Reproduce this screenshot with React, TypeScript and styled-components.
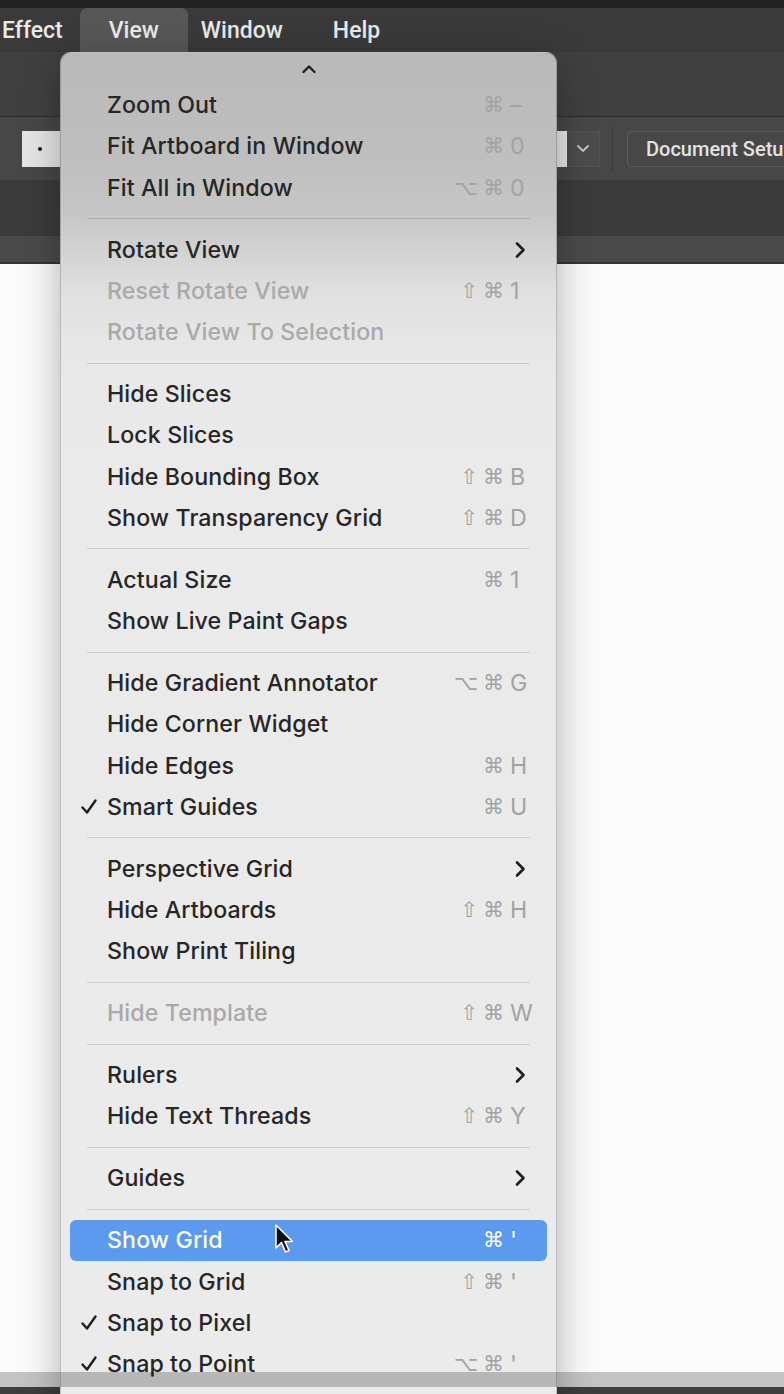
import React from 'react';
import styled, { createGlobalStyle } from 'styled-components';

// ========== Style start ==========================

const GlobalStyle = createGlobalStyle`
  html, body {
    margin: 0;
    padding: 0;
    height: 100%;
    overflow: hidden;
    background: #fbfbfb;
  }
  #root {
    height: 100%;
  }
`;

const Screen = styled.div`
  position: relative;
  height: 1394px;
  display: flex;
  flex-direction: column;
  overflow: hidden;
  font-family: Inter, "Noto Sans", sans-serif;
`;

const TopEdge = styled.div`
  height: 8px;
  background: #222222;
`;

const MenuBar = styled.div`
  height: 44px;
  display: flex;
  align-items: stretch;
  padding-left: 2px;
  background: #3a3a3a;
`;

const MenuTitle = styled.div<{ $active?: boolean; $ml?: number }>`
  display: flex;
  align-items: center;
  flex-shrink: 0;
  margin-left: ${p => p.$ml ?? 0}px;
  padding: 0 ${p => (p.$active ? 29 : 0)}px;
  font-family: Roboto, "Noto Sans", sans-serif;
  font-size: 23px;
  font-weight: 500;
  color: #e9e9e9;
  background: ${p => (p.$active ? '#575757' : 'transparent')};
  border-radius: 7px 7px 0 0;
`;

const ToolStrip = styled.div`
  height: 64px;
  background: #404040;
  border-bottom: 1px solid #2c2c2c;
`;

const ControlBar = styled.div`
  height: 63px;
  display: flex;
  align-items: center;
  padding-left: 22px;
  background: #474747;

  & > * {
    flex-shrink: 0;
  }
`;

const ValueField = styled.div`
  width: 545px;
  height: 36px;
  display: flex;
  align-items: center;
  padding-left: 16px;
  box-sizing: border-box;
  background: #e6e6e6;

  &::before {
    content: "";
    width: 4px;
    height: 4px;
    border-radius: 50%;
    background: #111;
  }
`;

const DropButton = styled.div`
  width: 33px;
  height: 36px;
  display: flex;
  align-items: center;
  justify-content: center;
  box-sizing: border-box;
  background: #4c4c4c;
  border: 1px solid #545454;
  border-left: none;
`;

const BarDivider = styled.div`
  width: 1px;
  height: 44px;
  margin: 0 14px 0 12px;
  background: #3a3a3a;
`;

const SetupButton = styled.div`
  height: 36px;
  display: flex;
  align-items: center;
  padding: 0 18px;
  border: 1px solid #5e5e5e;
  border-radius: 4px;
  box-sizing: border-box;
  font-family: Roboto, Inter, sans-serif;
  font-size: 20px;
  font-weight: 500;
  color: #e2e2e2;
  white-space: nowrap;
`;

const PanelBar = styled.div`
  height: 56px;
  background: #3b3b3b;
`;

const TabStrip = styled.div`
  height: 26px;
  background: #4a4a4a;
  border-bottom: 2px solid #333333;
`;

const Canvas = styled.div`
  flex: 1;
  background: #fbfbfb;
`;

const StatusBar = styled.div`
  height: 7px;
  background: #3e3e3e;
`;

const VideoBand = styled.div`
  position: absolute;
  left: 0;
  right: 0;
  bottom: 7px;
  height: 15px;
  background: rgba(0, 0, 0, 0.22);
  z-index: 5;
`;

const Dropdown = styled.div`
  position: absolute;
  top: 52px;
  left: 60px;
  width: 497px;
  bottom: -60px;
  box-sizing: border-box;
  background: linear-gradient(
    to bottom,
    #b9b9b9 0px,
    #bfbfbf 110px,
    #c6c6c6 160px,
    #d3d3d3 200px,
    #e0e0e0 240px,
    #e8e8e8 300px,
    #eaeaea 400px,
    #ebebeb 100%
  );
  border: 1px solid rgba(0, 0, 0, 0.18);
  border-radius: 11px;
  box-shadow: 0 10px 40px rgba(0, 0, 0, 0.3);
  z-index: 3;
`;

const ScrollUp = styled.div`
  height: 31.4px;
  display: flex;
  align-items: center;
  justify-content: center;
`;

const Item = styled.div<{ $active?: boolean; $disabled?: boolean }>`
  position: relative;
  height: 41.3px;
  margin: 0 9px;
  padding: 0 19px 0 10px;
  display: flex;
  align-items: center;
  border-radius: 6px;
  font-size: 23.2px;
  font-weight: 500;
  letter-spacing: 0.1px;
  color: ${p => (p.$active ? '#ffffff' : p.$disabled ? '#a9a9a9' : '#262626')};
  background: ${p => (p.$active ? '#5b9aef' : 'transparent')};
`;

const CheckCell = styled.div`
  width: 27px;
  display: flex;
  align-items: center;
`;

const Label = styled.div`
  flex: 1;
  white-space: nowrap;
`;

const Shortcut = styled.div<{ $active?: boolean }>`
  display: flex;
  align-items: center;
  color: ${p => (p.$active ? '#ffffff' : '#a2a2a2')};
`;

const Mods = styled.span`
  font-family: "DejaVu Sans", sans-serif;
  font-size: 21px;
  font-weight: 400;
  letter-spacing: 5px;
`;

const Key = styled.span`
  width: 18px;
  margin-left: 1px;
  font-weight: 400;
`;

const Separator = styled.div`
  height: 1px;
  margin: 9.8px 26px;
  background: rgba(0, 0, 0, 0.13);
`;

// ========== Style end ==========================

type Entry =
  | { sep: true }
  | {
      sep?: false;
      label: string;
      mods?: string;
      keyName?: string;
      sub?: boolean;
      checked?: boolean;
      disabled?: boolean;
      active?: boolean;
    };

const entries: Entry[] = [
  { label: 'Zoom Out', mods: '⌘', keyName: '–' },
  { label: 'Fit Artboard in Window', mods: '⌘', keyName: '0' },
  { label: 'Fit All in Window', mods: '⌥⌘', keyName: '0' },
  { sep: true },
  { label: 'Rotate View', sub: true },
  { label: 'Reset Rotate View', mods: '⇧⌘', keyName: '1', disabled: true },
  { label: 'Rotate View To Selection', disabled: true },
  { sep: true },
  { label: 'Hide Slices' },
  { label: 'Lock Slices' },
  { label: 'Hide Bounding Box', mods: '⇧⌘', keyName: 'B' },
  { label: 'Show Transparency Grid', mods: '⇧⌘', keyName: 'D' },
  { sep: true },
  { label: 'Actual Size', mods: '⌘', keyName: '1' },
  { label: 'Show Live Paint Gaps' },
  { sep: true },
  { label: 'Hide Gradient Annotator', mods: '⌥⌘', keyName: 'G' },
  { label: 'Hide Corner Widget' },
  { label: 'Hide Edges', mods: '⌘', keyName: 'H' },
  { label: 'Smart Guides', mods: '⌘', keyName: 'U', checked: true },
  { sep: true },
  { label: 'Perspective Grid', sub: true },
  { label: 'Hide Artboards', mods: '⇧⌘', keyName: 'H' },
  { label: 'Show Print Tiling' },
  { sep: true },
  { label: 'Hide Template', mods: '⇧⌘', keyName: 'W', disabled: true },
  { sep: true },
  { label: 'Rulers', sub: true },
  { label: 'Hide Text Threads', mods: '⇧⌘', keyName: 'Y' },
  { sep: true },
  { label: 'Guides', sub: true },
  { sep: true },
  { label: 'Show Grid', mods: '⌘', keyName: "'", active: true },
  { label: 'Snap to Grid', mods: '⇧⌘', keyName: "'" },
  { label: 'Snap to Pixel', checked: true },
  { label: 'Snap to Point', mods: '⌥⌘', keyName: "'", checked: true },
];

const CheckMark = () => (
  <svg width="18" height="18" viewBox="0 0 18 18">
    <path d="M2.5 9.5 L7 14.5 L15.5 2.5" fill="none" stroke="#1f1f1f" strokeWidth="2.4" strokeLinecap="round" strokeLinejoin="round" />
  </svg>
);

const SubArrow = () => (
  <svg width="12" height="18" viewBox="0 0 12 18" style={{ marginRight: 2 }}>
    <path d="M3 2.5 L9.5 9 L3 15.5" fill="none" stroke="#1f1f1f" strokeWidth="2.6" strokeLinecap="round" strokeLinejoin="round" />
  </svg>
);

const Cursor = () => (
  <svg width="22" height="32" viewBox="0 0 22 32" style={{ position: 'absolute', left: 204, top: 4 }}>
    <path d="M2 1 L2 24 L7.5 18.5 L11.5 28 L15 26.5 L11 17.5 L18.5 17.5 Z" fill="#111" stroke="#fff" strokeWidth="1.6" strokeLinejoin="round" />
  </svg>
);

const App: React.FC = () => {
  return (
    <Screen>
      <GlobalStyle />
      <TopEdge />
      <MenuBar>
        <MenuTitle>Effect</MenuTitle>
        <MenuTitle $active $ml={17}>View</MenuTitle>
        <MenuTitle $ml={13}>Window</MenuTitle>
        <MenuTitle $ml={50}>Help</MenuTitle>
      </MenuBar>
      <ToolStrip />
      <ControlBar>
        <ValueField />
        <DropButton>
          <svg width="14" height="9" viewBox="0 0 14 9">
            <path d="M2 2 L7 7 L12 2" fill="none" stroke="#c8c8c8" strokeWidth="1.8" strokeLinecap="round" />
          </svg>
        </DropButton>
        <BarDivider />
        <SetupButton>Document Setup</SetupButton>
      </ControlBar>
      <PanelBar />
      <TabStrip />
      <Canvas />
      <StatusBar />

      <Dropdown>
        <ScrollUp>
          <svg width="16" height="10" viewBox="0 0 16 10">
            <path d="M2.5 8 L8 2.5 L13.5 8" fill="none" stroke="#1f1f1f" strokeWidth="2.4" strokeLinecap="round" strokeLinejoin="round" />
          </svg>
        </ScrollUp>
        {entries.map((e, i) =>
          e.sep ? (
            <Separator key={i} />
          ) : (
            <Item key={i} $active={e.active} $disabled={e.disabled}>
              <CheckCell>{e.checked && <CheckMark />}</CheckCell>
              <Label>{e.label}</Label>
              {e.sub && <SubArrow />}
              {e.mods && (
                <Shortcut $active={e.active}>
                  <Mods>{e.mods}</Mods>
                  <Key>{e.keyName}</Key>
                </Shortcut>
              )}
              {e.active && <Cursor />}
            </Item>
          )
        )}
      </Dropdown>

      <VideoBand />
    </Screen>
  );
};

export default App;
